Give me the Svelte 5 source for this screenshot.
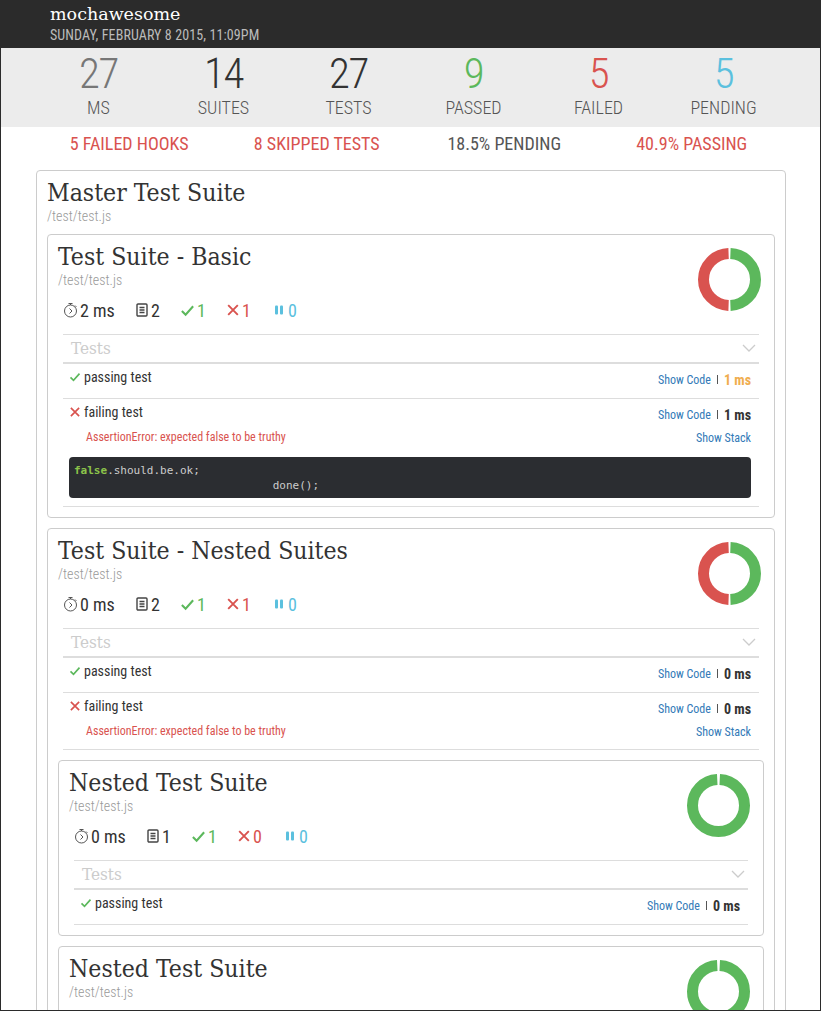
<script>
    const stats = [
        { value: 27, label: "ms", tone: "muted" },
        { value: 14, label: "suites", tone: "dark" },
        { value: 27, label: "tests", tone: "dark" },
        { value: 9, label: "passed", tone: "pass" },
        { value: 5, label: "failed", tone: "fail" },
        { value: 5, label: "pending", tone: "pend" }
    ];

    const quick = [
        { text: "5 failed hooks", bad: true },
        { text: "8 skipped tests", bad: true },
        { text: "18.5% pending", bad: false },
        { text: "40.9% passing", bad: true }
    ];

    const failing = {
        title: "failing test",
        ok: false,
        error: "AssertionError: expected false to be truthy"
    };

    const basic = {
        title: "Test Suite - Basic",
        ms: 2, tests: 2, pass: 1, fail: 1, pend: 0,
        rows: [
            { title: "passing test", ok: true, ms: 1, slow: true },
            { ...failing, ms: 1, code: true }
        ]
    };

    const nested = {
        title: "Test Suite - Nested Suites",
        ms: 0, tests: 2, pass: 1, fail: 1, pend: 0,
        rows: [
            { title: "passing test", ok: true, ms: 0 },
            { ...failing, ms: 0 }
        ],
        children: [
            {
                title: "Nested Test Suite",
                ms: 0, tests: 1, pass: 1, fail: 0, pend: 0,
                rows: [{ title: "passing test", ok: true, ms: 0 }]
            },
            {
                title: "Nested Test Suite",
                ms: 0, tests: 1, pass: 1, fail: 0, pend: 0,
                rows: [{ title: "passing test", ok: true, ms: 0 }]
            }
        ]
    };
</script>

{#snippet check(size)}
    <svg class="pass" width={size} height={size} viewBox="0 0 16 16"><path d="M2 8.5 6 12.5 14 3.5" fill="none" stroke="currentColor" stroke-width="2.2" /></svg>
{/snippet}

{#snippet cross(size)}
    <svg class="fail" width={size} height={size} viewBox="0 0 16 16"><path d="M2.5 2.5 13.5 13.5M13.5 2.5 2.5 13.5" fill="none" stroke="currentColor" stroke-width="2.2" /></svg>
{/snippet}

{#snippet donut(failed)}
    <svg class="donut" width="63" height="63" viewBox="0 0 63 63" fill="none" stroke-width="11">
        {#if failed}
            <circle class="arc" cx="31.5" cy="31.5" r="26" pathLength="100" stroke="#5cb85c" stroke-dasharray="48.8 51.2" stroke-dashoffset="-0.6" />
            <circle class="arc" cx="31.5" cy="31.5" r="26" pathLength="100" stroke="#d9534f" stroke-dasharray="48.8 51.2" stroke-dashoffset="-50.6" />
        {:else}
            <circle class="arc" cx="31.5" cy="31.5" r="26" pathLength="100" stroke="#5cb85c" stroke-dasharray="98.4 1.6" stroke-dashoffset="-0.8" />
        {/if}
    </svg>
{/snippet}

{#snippet suite(s)}
    <section class="suite">
        <div class="suite-head">
            <div>
                <h3>{s.title}</h3>
                <p class="file">/test/test.js</p>
                <div class="counts">
                    <span class="count time">
                        <svg width="15" height="16" viewBox="0 0 15 16" fill="none" stroke="#555" stroke-width="1"><circle cx="7.5" cy="9" r="6" /><path d="M5.5 1.5h4M7.5 1.5V3M12 3.5l1.4 1.4M6.5 6.5 9 9l-2.5 2.5" /></svg>
                        {s.ms} ms
                    </span>
                    <span class="count tests">
                        <svg width="14" height="16" viewBox="0 0 14 16" fill="none" stroke="#444" stroke-width="1.4"><rect x="2" y="2" width="10" height="12" rx="1" /><path d="M4.5 5.5h5M4.5 8h5M4.5 10.5h5" /></svg>
                        {s.tests}
                    </span>
                    <span class="count pass">{@render check(15)}{s.pass}</span>
                    <span class="count fail">{@render cross(14)}{s.fail}</span>
                    <span class="count pend">
                        <svg width="12" height="12" viewBox="0 0 12 12" fill="currentColor"><rect x="2" y="1.5" width="3" height="9" rx="1" /><rect x="7" y="1.5" width="3" height="9" rx="1" /></svg>
                        {s.pend}
                    </span>
                </div>
            </div>
            {@render donut(s.fail > 0)}
        </div>

        <div class="tests-head">
            <span>Tests</span>
            <svg width="14" height="8" viewBox="0 0 14 8" fill="none" stroke="#ccc" stroke-width="1.3"><path d="M1 1l6 6 6-6" /></svg>
        </div>

        {#each s.rows as r}
            <div class="row">
                <div class="row-main">
                    <span class="row-title">
                        {#if r.ok}{@render check(12)}{:else}{@render cross(12)}{/if}
                        {r.title}
                    </span>
                    <span class="row-meta">
                        <a href="#code">Show Code</a>
                        <i></i>
                        <b class:slow={r.slow}>{r.ms} ms</b>
                    </span>
                </div>
                {#if r.error}
                    <div class="row-error">
                        <span>{r.error}</span>
                        <a href="#stack">Show Stack</a>
                    </div>
                {/if}
                {#if r.code}
                    <pre><code><em>false</em>.should.be.ok;
                              done();</code></pre>
                {/if}
            </div>
        {/each}

        {#each s.children ?? [] as child}
            {@render suite(child)}
        {/each}
    </section>
{/snippet}

<div class="page">
    <header>
        <h1>mochawesome</h1>
        <p>Sunday, February 8 2015, 11:09pm</p>
    </header>

    <div class="stats">
        {#each stats as st}
            <div class="stat">
                <strong class={st.tone}>{st.value}</strong>
                <span>{st.label}</span>
            </div>
        {/each}
    </div>

    <div class="quick">
        {#each quick as q}
            <span class:bad={q.bad}>{q.text}</span>
        {/each}
    </div>

    <section class="master">
        <h2>Master Test Suite</h2>
        <p class="file">/test/test.js</p>
        {@render suite(basic)}
        {@render suite(nested)}
    </section>
</div>

<style>
    :global(body) {
        background: #fff;
        height: 1011px;
        overflow: hidden;
    }

    .page {
        font-family: Roboto, "Liberation Sans", sans-serif;
        font-stretch: condensed;
        color: #333;
        border: 1px solid #2b2b2b;
        border-top: 0;
        height: 1011px;
        overflow: hidden;
        box-sizing: border-box;
    }

    header {
        background: #2b2b2b;
        height: 48px;
        padding-left: 50px;
        box-sizing: border-box;
        margin: 0 -1px;
    }

    h1 {
        margin: 0;
        padding-top: 3px;
        font: 400 17.5px/22px "DejaVu Serif", serif;
        color: #fff;
    }

    header p {
        margin: 0;
        font-size: 14px;
        line-height: 20px;
        letter-spacing: 0.1px;
        text-transform: uppercase;
        color: #bbb;
    }

    .stats {
        display: grid;
        grid-template-columns: repeat(6, 125px);
        padding-left: 35px;
        height: 79px;
        background: #ececec;
    }

    .stat {
        display: flex;
        flex-direction: column;
        align-items: center;
    }

    .stat strong {
        font-size: 43px;
        font-weight: 350;
        letter-spacing: -1.5px;
        line-height: 50px;
    }

    .stat span {
        font-size: 18px;
        font-weight: 300;
        line-height: 20px;
        text-transform: uppercase;
        color: #555;
    }

    .muted { color: #777; }
    .dark { color: #333; }
    .pass { color: #5cb85c; }
    .fail { color: #d9534f; }
    .pend { color: #5bc0de; }

    .quick {
        display: grid;
        grid-template-columns: repeat(4, 187.5px);
        padding-left: 34.5px;
        height: 43px;
        font-size: 18px;
        line-height: 34px;
        text-transform: uppercase;
        text-align: center;
        color: #555;
    }

    .quick .bad { color: #d9534f; }

    .master {
        margin: 0 34px 0 35px;
        border: 1px solid #ccc;
        border-radius: 4px;
        padding: 0 10px;
    }

    h2, h3 {
        margin: 0;
        font-family: "DejaVu Serif", serif;
        font-weight: 400;
        font-size: 24.6px;
        line-height: 30px;
    }

    h2 { padding-top: 7px; }

    .file {
        margin: 0;
        font-size: 14px;
        font-weight: 300;
        line-height: 16px;
        color: #999;
    }

    .suite {
        border: 1px solid #ccc;
        border-radius: 4px;
        padding: 7px 10px 10px;
        margin-top: 10px;
    }

    .suite-head {
        display: flex;
        justify-content: space-between;
    }

    .counts {
        display: flex;
        align-items: center;
        padding: 5px 0 0 5px;
        height: 34px;
        font-size: 18px;
    }

    .count {
        display: flex;
        align-items: center;
        gap: 2px;
    }

    .time { width: 72px; }
    .tests { width: 45px; }
    .count.pass { width: 46px; }
    .count.fail { width: 47px; }
    .count.pend { gap: 3px; }

    .donut {
        margin: 6px 3px 0 0;
        flex: none;
    }

    .arc {
        transform: rotate(-90deg);
        transform-origin: center;
    }

    .tests-head {
        display: flex;
        align-items: center;
        justify-content: space-between;
        margin: 7px 5px 0;
        padding: 0 3px 2px 8px;
        height: 25px;
        border-top: 1px solid #ddd;
        border-bottom: 2px solid #ddd;
        font-family: "DejaVu Serif", serif;
        font-size: 17px;
        color: #ccc;
    }

    .row {
        margin: 0 5px;
        padding: 5px 8px 6px 6px;
        border-bottom: 1px solid #ddd;
        font-size: 14px;
    }

    .row-main, .row-error {
        display: flex;
        justify-content: space-between;
    }

    .row-main { height: 23px; }

    .row-title {
        display: flex;
        gap: 3px;
        align-items: center;
        height: 16px;
    }

    .row-meta {
        display: flex;
        align-items: center;
        height: 21px;
        font-size: 14px;
    }

    .row-meta i {
        width: 1px;
        height: 9px;
        margin: 0 6px;
        background: #555;
    }

    .row-meta b { font-weight: 700; color: #333; }
    .row-meta b.slow { color: #f0ad4e; }

    a {
        color: #337ab7;
        text-decoration: none;
        font-size: 12px;
    }

    .row-error {
        height: 22px;
        padding-left: 17px;
        line-height: 21px;
        font-size: 12px;
        color: #d9534f;
    }

    .row-error a { margin-top: 1px; }

    pre {
        margin: 8px 0 2px;
        padding: 6px 5px 5px;
        height: 30px;
        background: #2b2d31;
        border-radius: 4px;
        color: #ccc;
        font: 11px/15px "DejaVu Sans Mono", monospace;
    }

    em {
        font-style: normal;
        font-weight: 700;
        color: #8bc34a;
    }
</style>
